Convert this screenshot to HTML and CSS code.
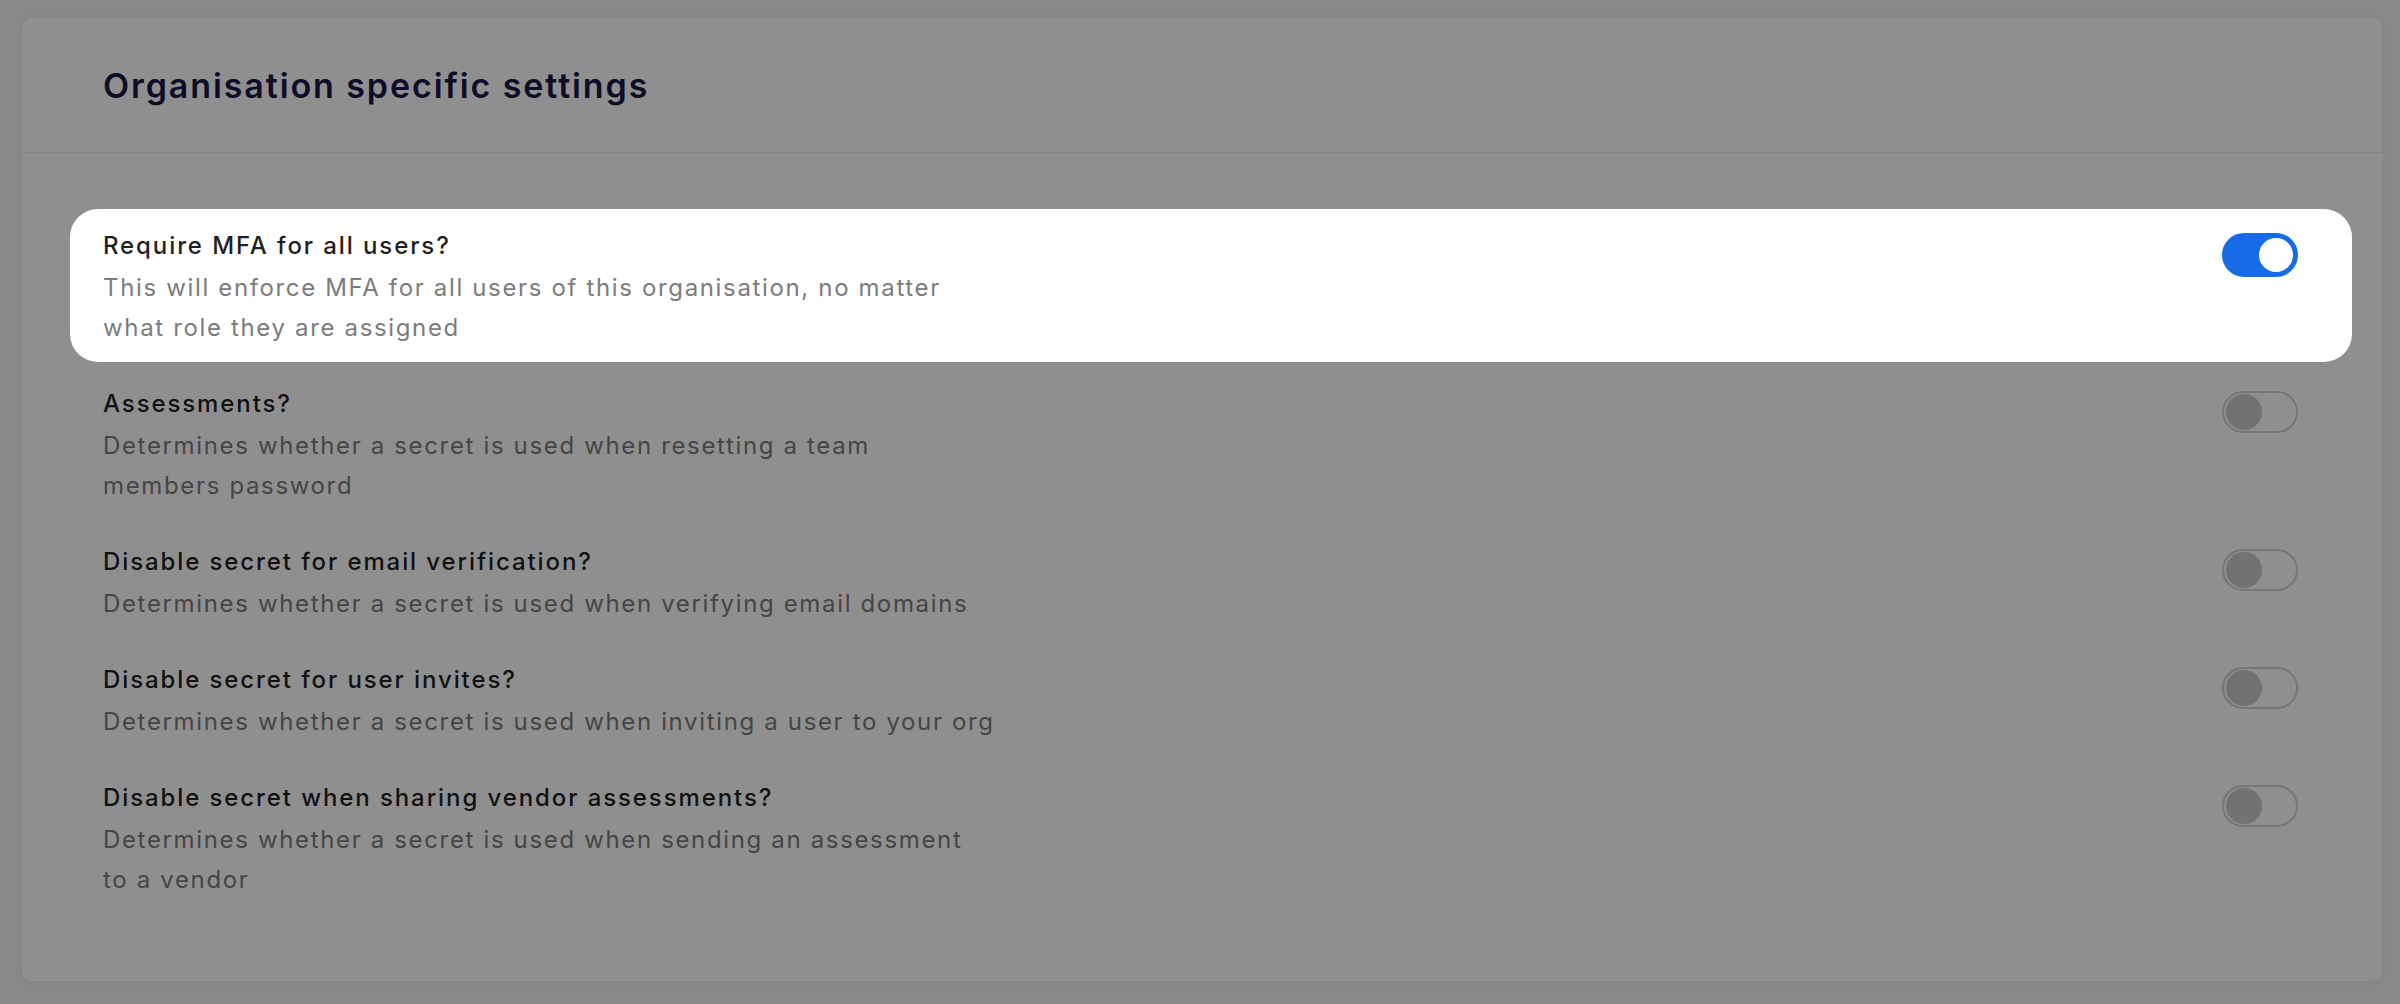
FILE: index.html
```html
<!DOCTYPE html>
<html lang="en">
  <head>
    <meta charset="UTF-8" />
    <meta name="viewport" content="width=device-width, initial-scale=1.0" />
    <title>Organisation settings</title>
    <link rel="stylesheet" href="styles.css">
  </head>
  <body>
    <div class="card">
      <div class="card-header">
        <h2 class="card-title">Organisation specific settings</h2>
      </div>

      <div class="card-body">
        <!-- highlighted by the onboarding tour -->
        <div class="setting spotlight">
          <div class="setting-text">
            <div class="setting-title">Require MFA for all users?</div>
            <div class="setting-desc">This will enforce MFA for all users of this organisation, no matter<br>what role they are assigned</div>
          </div>
          <span class="toggle on"></span>
        </div>

        <div class="setting">
          <div class="setting-text">
            <div class="setting-title">Assessments?</div>
            <div class="setting-desc">Determines whether a secret is used when resetting a team<br>members password</div>
          </div>
          <span class="toggle"></span>
        </div>

        <div class="setting">
          <div class="setting-text">
            <div class="setting-title">Disable secret for email verification?</div>
            <div class="setting-desc">Determines whether a secret is used when verifying email domains</div>
          </div>
          <span class="toggle"></span>
        </div>

        <div class="setting">
          <div class="setting-text">
            <div class="setting-title">Disable secret for user invites?</div>
            <div class="setting-desc">Determines whether a secret is used when inviting a user to your org</div>
          </div>
          <span class="toggle"></span>
        </div>

        <div class="setting">
          <div class="setting-text">
            <div class="setting-title">Disable secret when sharing vendor assessments?</div>
            <div class="setting-desc">Determines whether a secret is used when sending an assessment<br>to a vendor</div>
          </div>
          <span class="toggle"></span>
        </div>
      </div>
    </div>
  </body>
</html>
```

FILE: styles.css
```css
body {
  margin: 0;
  padding: 18px 18px 23px 22px;
  background-color: #f4f4f6;
  font-family: Inter, "Noto Sans", sans-serif;
  overflow: hidden;
}

.card {
  background-color: #fff;
  border-radius: 10px;
  box-shadow: 0 1px 8px rgba(0, 0, 0, 0.06);
  height: 963px;
}

.card-header {
  height: 134px;
  display: flex;
  align-items: center;
  padding: 0 81px;
  border-bottom: 1px solid #ececef;
}

.card-title {
  margin: 0;
  font-size: 34px;
  font-weight: 600;
  letter-spacing: 1.9px;
  color: #1a1746;
}

.card-body {
  display: flex;
  flex-direction: column;
  gap: 5px;
  padding: 56px 30px 0 48px;
}

.setting {
  display: flex;
  justify-content: space-between;
  align-items: flex-start;
  padding: 19px 54px 14px 33px;
  border-radius: 28px;
}

.setting-title {
  font-size: 24px;
  line-height: 36px;
  font-weight: 500;
  letter-spacing: 1.9px;
  color: #1f1f1f;
}

.setting-desc {
  margin-top: 4px;
  font-size: 24px;
  line-height: 40px;
  letter-spacing: 1.65px;
  color: #7c7c7c;
  white-space: nowrap;
}

/* tour spotlight: everything else is dimmed */
.spotlight {
  position: relative;
  z-index: 2;
  background-color: #fff;
  box-shadow: 0 0 0 4000px rgba(0, 0, 0, 0.44);
}

.toggle {
  position: relative;
  flex-shrink: 0;
  width: 76px;
  height: 42px;
  margin-top: 5px;
  box-sizing: border-box;
  border: 2px solid #d0d0d0;
  border-radius: 21px;
}

.toggle::after {
  content: "";
  position: absolute;
  top: 1px;
  left: 2px;
  width: 36px;
  height: 36px;
  border-radius: 50%;
  background-color: #cbcbcb;
}

.toggle.on {
  height: 44px;
  border-color: #176ce6;
  background-color: #176ce6;
  border-radius: 22px;
}

.toggle.on::after {
  top: 0;
  left: auto;
  right: 0;
  width: 34px;
  height: 34px;
  border: 3px solid #176ce6;
  background-color: #fff;
}
```
